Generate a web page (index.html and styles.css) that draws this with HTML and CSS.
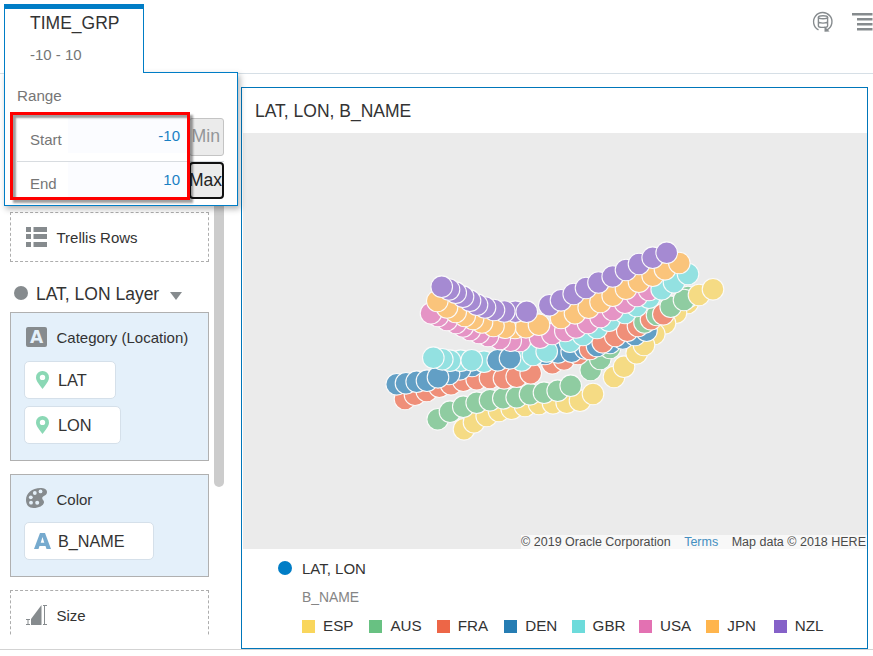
FILE: index.html
```html
<!DOCTYPE html>
<html lang="en">
<head>
<meta charset="utf-8">
<title>LAT, LON, B_NAME</title>
<link rel="stylesheet" href="styles.css">
</head>
<body>
<div class="app">
  <header class="toolbar">
    <button class="filter-tab">
      <span class="filter-name">TIME_GRP</span>
      <span class="filter-value">-10 - 10</span>
    </button>
    <div class="tools">
      <svg class="icon-refresh" width="22" height="22" viewBox="0 0 22 22" fill="none" stroke="#868b8e" stroke-width="1.4">
        <path d="M6.500 18.900A9.200 9.200 0 1 1 15.200 18.800"/>
        <path d="M13.200 17v3l2.800-.2z" fill="#868b8e"/>
        <ellipse cx="11" cy="6.300" rx="4.600" ry="1.500"/>
        <path d="M6.400 6.300v8.600c0 2 9.200 2 9.200 0V6.300M6.400 10.600c0 2 9.200 2 9.200 0"/>
      </svg>
      <svg class="icon-menu" width="21" height="20" viewBox="0 0 21 20" fill="#868b8e">
        <path d="M0 1h20.500v2.400H0zM5 6h15.500v2.400H5zM5 11h15.500v2.400H5zM5 16h15.500v2.600H5z"/>
      </svg>
    </div>
    <section class="range-popup">
      <h2 class="range-title">Range</h2>
      <div class="range-row">
        <span class="range-label">Start</span>
        <span class="range-value">-10</span>
        <button class="range-button" disabled>Min</button>
      </div>
      <div class="range-row">
        <span class="range-label">End</span>
        <span class="range-value">10</span>
        <button class="range-button focused">Max</button>
      </div>
      <div class="highlight"></div>
    </section>
  </header>
  <main class="workspace">
    <aside class="grammar">
      <div class="zones">
        <div class="zone trellis">
          <div class="zone-head">
            <svg width="21" height="20" viewBox="0 0 21 20" fill="#868b8e"><path d="M0 0h5v5H0zM7.500 0H21v5H7.500zM0 7h5v5H0zM7.500 7H21v5H7.500zM0 15h5v5H0zM7.500 15H21v5H7.500z"/></svg>
            <span>Trellis Rows</span>
          </div>
        </div>
        <div class="layer"><i class="layer-dot"></i><span>LAT, LON Layer</span><i class="caret"></i></div>
        <div class="zone filled category">
          <div class="zone-head"><i class="attr-icon">A</i><span>Category (Location)</span></div>
          <div class="chip lat"><svg width="13" height="18" viewBox="0 0 13 18"><path fill="#8bd8b5" fill-rule="evenodd" d="M6.500 0A6.400 6.400 0 0 0 0 6.400C0 10.200 3.500 13.500 6.500 18C9.500 13.500 13 10.200 13 6.400A6.400 6.400 0 0 0 6.500 0zM6.500 3.700a2.700 2.700 0 1 1 0 5.400a2.700 2.700 0 0 1 0-5.400z"/></svg><span>LAT</span></div>
          <div class="chip lon"><svg width="13" height="18" viewBox="0 0 13 18"><path fill="#8bd8b5" fill-rule="evenodd" d="M6.500 0A6.400 6.400 0 0 0 0 6.400C0 10.200 3.500 13.500 6.500 18C9.500 13.500 13 10.200 13 6.400A6.400 6.400 0 0 0 6.500 0zM6.500 3.700a2.700 2.700 0 1 1 0 5.400a2.700 2.700 0 0 1 0-5.400z"/></svg><span>LON</span></div>
        </div>
        <div class="zone filled color">
          <div class="zone-head">
            <svg width="21" height="20" viewBox="0 0 21 20"><path fill="#868b8e" d="M14.500 0C6 0 0 5 0 12c0 5 3 8 7.500 8 5.500 0 10-2.500 10.500-5.500 .3-2-2.200-2.700-1.700-4.900C16.700 7.800 21 7.600 21 4c0-2.600-3-4-6.500-4z"/><g fill="#e4f0f9"><circle cx="14.500" cy="3.400" r="1.900"/><circle cx="8.800" cy="5" r="1.900"/><circle cx="4.800" cy="9.300" r="1.900"/><circle cx="5" cy="14.700" r="1.900"/><circle cx="11.200" cy="14.800" r="2"/></g></svg>
            <span>Color</span>
          </div>
          <div class="chip bname"><svg width="17" height="16" viewBox="0 0 17 16"><path fill="#76aace" fill-rule="evenodd" d="M6 0h5l6 16h-4.500l-1-3h-6l-1 3H0zM8.500 4L6.700 9.800h3.600z"/></svg><span>B_NAME</span></div>
        </div>
        <div class="zone size">
          <div class="zone-head">
            <svg width="21" height="20" viewBox="0 0 21 20"><path fill="#868b8e" d="M5 20v-6L15.500 0v20z"/><path fill="none" stroke="#868b8e" d="M0 14.500h4M0 19.500h4M2 14.500v5M17 .5h4M17 19.500h4M18.500 .5v19"/></svg>
            <span>Size</span>
          </div>
        </div>
      </div>
      <div class="scroll-thumb"></div>
    </aside>
    <section class="chart">
      <h1 class="chart-title">LAT, LON, B_NAME</h1>
      <div class="map">
        <svg id="points" class="points" width="624" height="416" viewBox="243 133 624 416"></svg>
        <div class="credits"><span>© 2019 Oracle Corporation</span><a>Terms</a><span>Map data © 2018 HERE</span></div>
      </div>
      <div class="legend">
        <div class="legend-layer"><i></i><span>LAT, LON</span></div>
        <div class="legend-title">B_NAME</div>
        <div class="legend-items">
          <span><i class="esp"></i>ESP</span><span><i class="aus"></i>AUS</span><span><i class="fra"></i>FRA</span><span><i class="den"></i>DEN</span><span><i class="gbr"></i>GBR</span><span><i class="usa"></i>USA</span><span><i class="jpn"></i>JPN</span><span><i class="nzl"></i>NZL</span>
        </div>
      </div>
    </section>
  </main>
</div>
<script src="points.js"></script>
</body>
</html>
```
FILE: styles.css
```css
* { box-sizing: border-box; }
body { margin: 0; background: #fff; color: #333; font-family: "Liberation Sans", Arial, sans-serif; font-size: 15px; }
h1, h2 { margin: 0; font-weight: normal; }
button { font-family: inherit; }
i { font-style: normal; }
.app { width: 873px; height: 650px; display: flex; flex-direction: column; border-bottom: 1px solid #d3d3d3; }
.toolbar { position: relative; z-index: 2; flex: none; height: 74px; padding: 4px 0 0 4px; display: flex; justify-content: space-between; border-bottom: 1px solid #d6dfe6; }
.filter-tab { position: relative; z-index: 2; width: 140px; height: 69px; padding: 4px 0 0 25px; display: flex; flex-direction: column; text-align: left; background: #fff; border: 1px solid #007dc6; border-top-width: 5px; border-bottom: 0; color: #333; }
.filter-name { font-size: 17.500px; line-height: 20px; }
.filter-value { margin-top: 13px; font-size: 15px; line-height: 18px; color: #767676; }
.tools { display: flex; align-items: flex-start; padding-top: 7px; gap: 18px; }
.icon-menu { margin-top: 1px; }
.range-popup { position: absolute; z-index: 1; left: 4px; top: 72px; width: 234px; height: 134px; padding: 14px 13px 0 12px; background: #fff; border: 1px solid #007dc6; box-shadow: 2px 3px 6px rgba(0,0,0,.3); }
.range-title { height: 31px; line-height: 18px; font-size: 15.200px; color: #767676; }
.range-row { height: 43px; width: 207px; display: flex; align-items: flex-start; }
.range-row + .range-row { border-top: 1px solid #d8dce0; }
.range-label { width: 51px; padding: 13px 0 0 13px; line-height: 18px; color: #767676; }
.range-value { width: 121px; height: 35px; padding: 9px 9px 0 0; text-align: right; line-height: 18px; color: #1a80c4; background: #fbfcff; }
.range-button { flex: none; width: 35px; height: 38px; margin: 0; padding: 0 3px 2px 0; display: flex; align-items: center; justify-content: flex-end; font-size: 17.700px; color: #939699; background: #ebebeb; border: 1px solid #c4c4c4; border-radius: 3px; }
.range-button.focused { height: 37px; padding: 0 0 1px; font-size: 17.500px; color: #222; border: 2px solid #111; border-radius: 4px; }
.highlight { position: absolute; left: 5px; top: 39px; width: 180px; height: 88px; border: 3px solid #f00; box-shadow: 3px 3px 2px rgba(0,0,0,.38), inset 3px 3px 2px rgba(0,0,0,.38); }
.workspace { display: flex; flex: 1; min-height: 0; }
.grammar { width: 241px; display: flex; gap: 5px; padding: 132px 0 0 10px; height: 561px; }
.zones { width: 199px; padding-top: 6px; display: flex; flex-direction: column; overflow: hidden; }
.zone { flex: none; padding: 14px 0 0 13px; border: 1px dashed #adadad; }
.zone.filled { border: 1px solid #b0b0b0; background: #e4f0fa; }
.zone-head { display: flex; align-items: center; gap: 9.500px; height: 20px; padding-left: 2px; font-size: 15px; }
.zone-head svg { flex: none; }
.zone-head span { padding-top: 1px; }
.trellis { height: 50px; }
.layer { flex: none; height: 50px; padding: 14px 0 0 4px; display: flex; align-items: center; font-size: 17.500px; }
.layer-dot { width: 14px; height: 14px; margin: 0 8px 2px 0; border-radius: 50%; background: #868b8e; }
.caret { margin: 4px 0 0 11px; border: 6px solid transparent; border-top: 8px solid #868b8e; border-bottom: 0; }
.category { height: 149px; }
.color { height: 103px; margin-top: 13px; padding-top: 13px; }
.color .zone-head span { padding-top: 3px; }
.size { height: 60px; margin-top: 13px; padding-top: 14px; }
.attr-icon { width: 21px; height: 20px; border-radius: 2px; background: #868b8e; color: #e4f0fa; font: bold 17px/20px "DejaVu Sans", sans-serif; text-align: center; }
.chip { height: 38px; display: flex; align-items: center; gap: 9px; padding-left: 11px; background: #fff; border: 1px solid #d5e0ea; border-radius: 5px; font-size: 16.400px; }
.lat { width: 92px; margin-top: 14px; }
.lon { width: 97px; margin-top: 7px; }
.bname { width: 130px; margin-top: 14px; padding-left: 9px; gap: 7px; font-size: 16.200px; }
.bname span { padding-top: 1px; }
.scroll-thumb { width: 10px; height: 281px; background: #ccc; border-radius: 0 0 5px 5px; }
.chart { width: 627px; height: 562px; margin-top: 13px; border: 1px solid #0076ba; display: flex; flex-direction: column; }
.chart-title { flex: none; height: 45px; padding-left: 13px; line-height: 46px; font-size: 17.500px; }
.map { position: relative; flex: none; margin-left: 1px; width: 624px; height: 416px; background: #ebebeb; }
.points { display: block; }
.credits { position: absolute; right: 0; bottom: 0; height: 14px; padding-right: 1px; display: flex; gap: 13.500px; line-height: 15px; font-size: 12.500px; white-space: nowrap; color: #4b4b4b; background: #f8f8f8; }
.credits a { color: #448fc1; }
.legend { padding: 10px 0 0 36px; }
.legend-layer { display: flex; align-items: center; height: 20px; gap: 10px; font-size: 15px; }
.legend-layer span { padding-bottom: 1px; }
.legend-layer i { width: 14px; height: 14px; margin-bottom: 2px; border-radius: 50%; background: #007dc6; }
.legend-title { margin: 9px 0 0 24px; line-height: 18px; font-size: 13.900px; color: #858585; }
.legend-items { display: grid; grid-template-columns: repeat(8, 67.400px); margin: 10px 0 0 24px; font-size: 15.200px; line-height: 20px; }
.legend-items span { display: flex; align-items: center; gap: 8px; }
.legend-items i { width: 13px; height: 13px; }
.esp { background: #f9d65c; }
.aus { background: #68c182; }
.fra { background: #ed6647; }
.den { background: #267db3; }
.gbr { background: #6ddbdb; }
.usa { background: #e371b2; }
.jpn { background: #ffb54d; }
.nzl { background: #8561c8; }
```
FILE: points.js
```js
// Each run is drawn in order, so later entries overlap earlier ones.
const runs = [
  ["#f5db84", [[464,429.300],[474,422.300],[486.700,416],[499,411],[511.700,408.700],[525,406],[539,404],[553,403.300],[566.700,402.700],[580,400.700],[593,394]]],
  ["#f5db84", [[687.700,303],[676,312.700],[665,323.300],[654.300,334],[614,377],[624,366.700],[636.700,353.300],[644,345]]],
  ["#8fcca1", [[437.700,419.300],[450,411.700],[463.300,406.700],[476.700,402.700],[490,400.300],[503.300,398.300],[516.700,397.300],[530,394.300],[544,392.700],[557.700,390.700],[570.700,385.700]]],
  ["#8fcca1", [[590.700,370],[600.300,359],[610,348],[632,333]]],
  ["#ef8f79", [[405,399],[415,394.700],[426.700,391],[439.300,386.700],[451,384.300],[463.300,380.700],[476.700,379.300],[490,378],[504,378.300],[516.700,376.700],[530.700,373.300]]],
  ["#ef8f79", [[552.300,363.300],[564,359.500],[578,354]]],
  ["#629fc5", [[472,366],[460,369.300],[449,374],[396.700,384.300],[406,383.300],[416.700,381.700],[427,380.700],[438,377.300]]],
  ["#629fc5", [[545,354],[558,352.500],[571.700,351.700],[585,348.500]]],
  ["#ef8f79", [[590,349]]],
  ["#629fc5", [[597,346],[610,343],[622.700,338.500],[635,335],[646.500,330.700]]],
  ["#ef8f79", [[602.700,342.300],[615.300,336],[627.300,330.700],[638,326]]],
  ["#8fcca1", [[644.500,322.500]]],
  ["#ef8f79", [[651,319.300]]],
  ["#8fcca1", [[657,315]]],
  ["#ef8f79", [[663.300,314.300]]],
  ["#93e1e1", [[521.700,360.500],[533,355],[546.700,351.500],[484,361.700],[460.700,360.700],[450,360.700],[442.300,359.300],[433.300,357.700],[471.700,360.300]]],
  ["#629fc5", [[497.700,360.300],[510,358.300]]],
  ["#93e1e1", [[570,341.700],[583,335],[597,328],[609,320.700],[625,313],[636.700,306],[649,297.700]]],
  ["#8fcca1", [[670.700,306.700],[688,297],[684,300]]],
  ["#f5db84", [[699,295],[713,289.300]]],
  ["#e594c5", [[520,341],[510.700,340.700],[499.700,339],[488,336],[479,333],[470,330],[463,326.500],[456,323],[447,320],[438,316],[431,313.300]]],
  ["#e594c5", [[540,337.700],[552.300,334],[565.300,331],[576,327.500],[588,323],[600.500,317],[612.700,310],[625,302.700],[637,296],[649,290]]],
  ["#93e1e1", [[661.700,289.300],[674,282.300],[688,274]]],
  ["#fac47b", [[515,328],[526,327.300],[505,327.700],[493.500,326],[482,322.500],[473,319],[464.700,316],[455.700,312],[447,307.500],[437.300,301],[539,324.700]]],
  ["#fac47b", [[561,318],[575,313.300],[588.700,307.700],[600.500,302],[612.700,295.700],[626,288.700],[639,281.700],[652.700,275.700],[665,269.300],[679.300,263]]],
  ["#a58ad2", [[515.300,311.700],[526.700,311.700],[504.300,311.500],[494,310],[485,307.500],[477,304.700],[470,300.700],[463,296.700],[455.700,292.700],[449,289.500],[441.700,286.700]]],
  ["#a58ad2", [[549.300,305.300],[561,300.300],[573.700,294],[586,288],[598.500,282.500],[612.700,276.500],[626,270],[639,264],[652.700,257.700],[666.700,252.700]]]
];

const svg = document.getElementById("points");
for (const [fill, centers] of runs) {
  for (const [x, y] of centers) {
    const dot = document.createElementNS("http://www.w3.org/2000/svg", "circle");
    dot.setAttribute("cx", x);
    dot.setAttribute("cy", y);
    dot.setAttribute("r", 10.8);
    dot.setAttribute("fill", fill);
    dot.setAttribute("stroke", "#fafafa");
    dot.setAttribute("stroke-width", 1.1);
    svg.appendChild(dot);
  }
}
```
